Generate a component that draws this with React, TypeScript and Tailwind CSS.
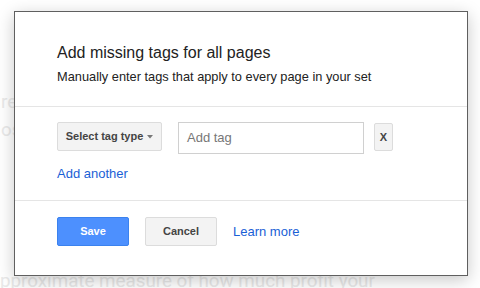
const FONT = { fontFamily: '"Liberation Sans", Arial, sans-serif' };

function Caret() {
  return (
    <svg width="6" height="4" viewBox="0 0 6 4" className="ml-[4px] mt-[1px]">
      <path d="M0 0h6L3 3.5z" fill="#777" />
    </svg>
  );
}

export default function App() {
  return (
    <div
      className="relative w-[480px] h-[288px] overflow-hidden bg-white"
      style={FONT}
    >
      {/* page behind the dialog */}
      <div
        className="flex flex-col text-[18.8px] leading-[28px] text-[#e9e9e9] whitespace-nowrap"
        style={{ fontFamily: "Roboto, Arial, sans-serif" }}
      >
        <p className="mt-[88px] pl-[1px]">re</p>
        <p className="pl-[1px]">os</p>
        <p className="mt-[123px]">pproximate measure of how much profit your</p>
      </div>

      {/* dialog */}
      <div className="absolute left-[14px] top-[11px] w-[454px] h-[265px] border border-[#5f5f5f] bg-white shadow-[0_4px_16px_rgba(0,0,0,0.22)] flex flex-col">
        <div className="pl-[42px] pt-[32px] pb-[21px] border-b border-[#e5e5e5]">
          <h1 className="text-[16px] leading-[18px] text-[#222]">
            Add missing tags for all pages
          </h1>
          <p className="mt-[7px] text-[12.8px] leading-[16px] text-[#222]">
            Manually enter tags that apply to every page in your set
          </p>
        </div>

        <div className="pl-[42px] pt-[15px] pb-[18px] border-b border-[#e5e5e5]">
          <div className="flex items-start">
            <button className="h-[29px] w-[105px] flex items-center justify-center rounded-[2px] border border-[#dcdcdc] bg-[#f3f3f3] text-[11px] font-bold text-[#444]">
              Select tag type
              <Caret />
            </button>
            <div className="ml-[16px] h-[32px] w-[186px] border border-[#d0d0d0] flex items-center pl-[8px] text-[13px] text-[#777]">
              Add tag
            </div>
            <button className="ml-[10px] mt-[1px] h-[28px] w-[19px] flex items-center justify-center rounded-[2px] border border-[#dcdcdc] bg-[#f3f3f3] text-[11px] font-bold text-[#444]">
              X
            </button>
          </div>
          <a className="block mt-[12px] text-[13px] leading-[16px] text-[#1a5fd6]">
            Add another
          </a>
        </div>

        <div className="pl-[42px] pt-[16px] flex items-center">
          <button className="h-[29px] w-[72px] flex items-center justify-center rounded-[2px] border border-[#3b82ee] bg-[#4d90fe] text-[11px] font-bold text-white">
            Save
          </button>
          <button className="ml-[16px] h-[29px] w-[72px] flex items-center justify-center rounded-[2px] border border-[#dcdcdc] bg-[#f3f3f3] text-[11px] font-bold text-[#444]">
            Cancel
          </button>
          <a className="ml-[16px] text-[13px] leading-[16px] text-[#1a5fd6]">
            Learn more
          </a>
        </div>
      </div>
    </div>
  );
}
